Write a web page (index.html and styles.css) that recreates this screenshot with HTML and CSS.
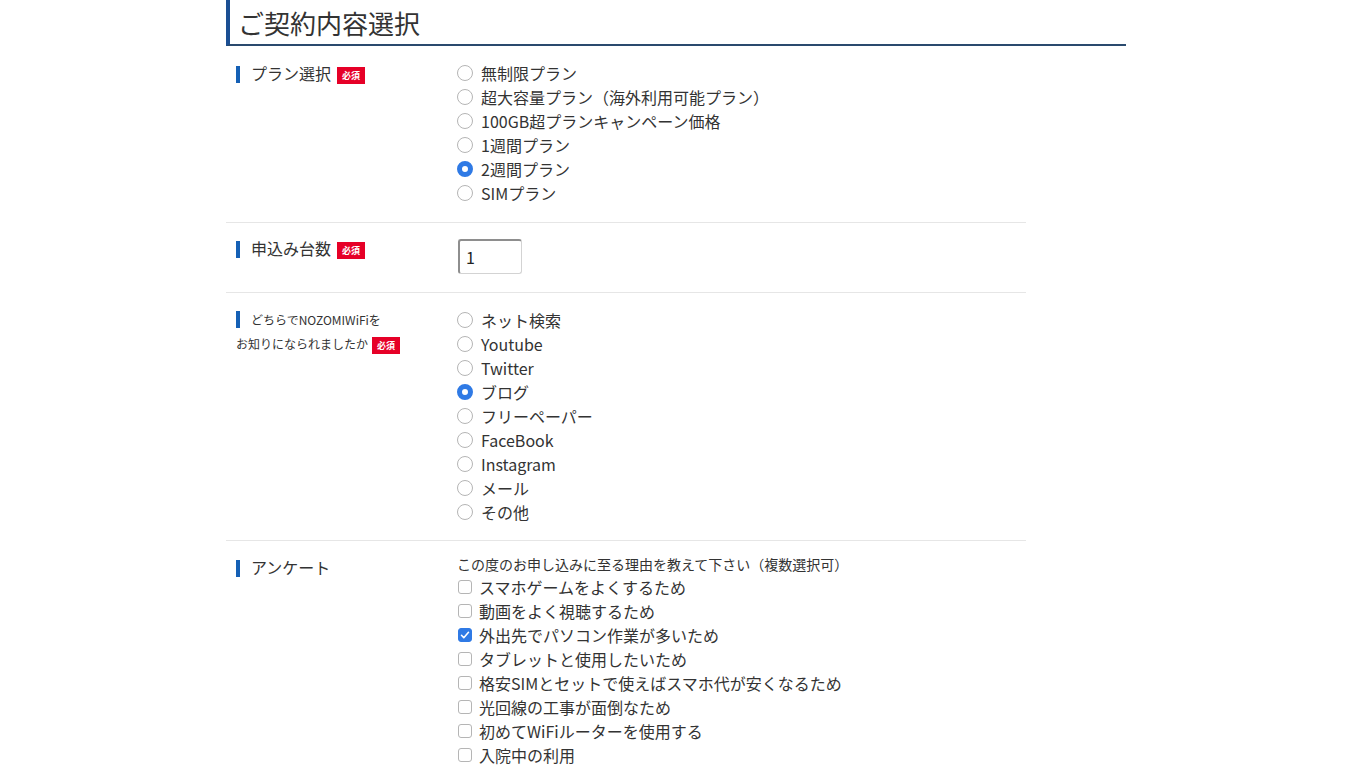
FILE: index.html
```html
<!DOCTYPE html>
<html lang="ja">
<head>
    <meta charset="UTF-8">
    <title>ご契約内容選択</title>
    <link rel="stylesheet" href="styles.css">
</head>
<body>
    <div class="page">
        <h2 class="section-title">ご契約内容選択</h2>

        <!-- プラン -->
        <div class="form-row row-plan">
            <div class="form-label"><span class="label-text">プラン選択</span><span class="required">必須</span></div>
            <div class="form-value">
                <label class="radio"><input type="radio" name="plan"> 無制限プラン</label>
                <label class="radio"><input type="radio" name="plan"> 超大容量プラン（海外利用可能プラン）</label>
                <label class="radio"><input type="radio" name="plan"> 100GB超プランキャンペーン価格</label>
                <label class="radio"><input type="radio" name="plan"> 1週間プラン</label>
                <label class="radio"><input type="radio" name="plan" checked> 2週間プラン</label>
                <label class="radio"><input type="radio" name="plan"> SIMプラン</label>
            </div>
        </div>

        <!-- 台数 -->
        <div class="form-row row-count">
            <div class="form-label"><span class="label-text">申込み台数</span><span class="required">必須</span></div>
            <div class="form-value">
                <input type="text" class="count-input" value="1">
            </div>
        </div>

        <!-- きっかけ -->
        <div class="form-row">
            <div class="form-label small"><span class="label-text">どちらでNOZOMIWiFiを<br>お知りになられましたか</span><span class="required">必須</span></div>
            <div class="form-value">
                <label class="radio"><input type="radio" name="from"> ネット検索</label>
                <label class="radio"><input type="radio" name="from"> Youtube</label>
                <label class="radio"><input type="radio" name="from"> Twitter</label>
                <label class="radio"><input type="radio" name="from" checked> ブログ</label>
                <label class="radio"><input type="radio" name="from"> フリーペーパー</label>
                <label class="radio"><input type="radio" name="from"> FaceBook</label>
                <label class="radio"><input type="radio" name="from"> Instagram</label>
                <label class="radio"><input type="radio" name="from"> メール</label>
                <label class="radio"><input type="radio" name="from"> その他</label>
            </div>
        </div>

        <!-- アンケート -->
        <div class="form-row row-survey">
            <div class="form-label"><span class="label-text">アンケート</span></div>
            <div class="form-value">
                <p class="survey-note">この度のお申し込みに至る理由を教えて下さい（複数選択可）</p>
                <label class="check"><input type="checkbox"> スマホゲームをよくするため</label>
                <label class="check"><input type="checkbox"> 動画をよく視聴するため</label>
                <label class="check"><input type="checkbox" checked> 外出先でパソコン作業が多いため</label>
                <label class="check"><input type="checkbox"> タブレットと使用したいため</label>
                <label class="check"><input type="checkbox"> 格安SIMとセットで使えばスマホ代が安くなるため</label>
                <label class="check"><input type="checkbox"> 光回線の工事が面倒なため</label>
                <label class="check"><input type="checkbox"> 初めてWiFiルーターを使用する</label>
                <label class="check"><input type="checkbox"> 入院中の利用</label>
            </div>
        </div>
    </div>
</body>
</html>
```

FILE: styles.css
```css
/* Base */
body {
    margin: 0;
    font-family: "Noto Sans CJK JP", "Noto Sans", sans-serif;
    color: #333;
    background: #fff;
}

.page {
    width: 900px;
    margin: 0 0 0 226px;
}

/* Section heading */
.section-title {
    margin: 0;
    padding: 4px 0 2px 8px;
    font-size: 26px;
    font-weight: normal;
    line-height: 38px;
    border-left: 4px solid #1b4f93;
    border-bottom: 2px solid #2a4a6e;
}

/* Form rows */
.form-row {
    display: flex;
    width: 800px;
    padding: 15px 0 16px;
    border-bottom: 1px solid #e6e6e6;
}

.row-plan {
    padding-bottom: 17px;
}

.form-label {
    width: 221px;
    padding-left: 10px;
    font-size: 16px;
    line-height: 24px;
}

.label-text::before {
    content: "";
    display: inline-block;
    width: 4px;
    height: 17px;
    margin-right: 11px;
    background: #1560b5;
    vertical-align: -3px;
}

.form-label.small {
    font-size: 12px;
}

.required {
    display: inline-block;
    margin-left: 6px;
    padding: 0 5px;
    height: 17px;
    line-height: 17px;
    background: #e60027;
    color: #fff;
    font-size: 9px;
    font-weight: bold;
    vertical-align: 1px;
}

.form-label.small .required {
    margin-left: 4px;
    vertical-align: 0;
}

.form-value {
    flex: 1;
    font-size: 16px;
}

/* Radio buttons */
.radio {
    display: flex;
    align-items: center;
    height: 24px;
}

.radio input {
    appearance: none;
    -webkit-appearance: none;
    width: 16px;
    height: 16px;
    margin: 0 8px 0 0;
    border: 1px solid #b5b5b5;
    border-radius: 50%;
    background: #fff;
    box-sizing: border-box;
}

.radio input:checked {
    border: 5px solid #2f7ae5;
    background: #fff;
}

/* Count input */
.row-count {
    padding: 16px 0 18px;
}

.row-count .form-label {
    margin-top: -3px;
}

.count-input {
    width: 64px;
    height: 35px;
    margin-left: 1px;
    padding: 0 6px;
    box-sizing: border-box;
    border: 1px solid #d3d3d3;
    border-top: 2px solid #8e8e8e;
    border-left: 2px solid #8e8e8e;
    border-radius: 3px;
    font-family: inherit;
    font-size: 16px;
    color: #222;
}

/* Survey */
.row-survey {
    padding: 12px 0 0;
    border-bottom: none;
}

.row-survey .form-label {
    padding-top: 2px;
}

.survey-note {
    margin: 0;
    font-size: 14px;
    line-height: 22px;
}

.check {
    display: flex;
    align-items: center;
    height: 24px;
}

.check input {
    appearance: none;
    -webkit-appearance: none;
    width: 14px;
    height: 14px;
    margin: 0 7px 0 1px;
    border: 1px solid #b5b5b5;
    border-radius: 3px;
    background: #fff;
    box-sizing: border-box;
}

.check input:checked {
    border-color: #2f7ae5;
    background: #2f7ae5 url("data:image/svg+xml,%3Csvg xmlns='http://www.w3.org/2000/svg' viewBox='0 0 14 14'%3E%3Cpath d='M3.5 7.3l2.3 2.4 4.7-5.4' fill='none' stroke='%23fff' stroke-width='1.6' stroke-linecap='round' stroke-linejoin='round'/%3E%3C/svg%3E") center / 14px 14px no-repeat;
}
```
